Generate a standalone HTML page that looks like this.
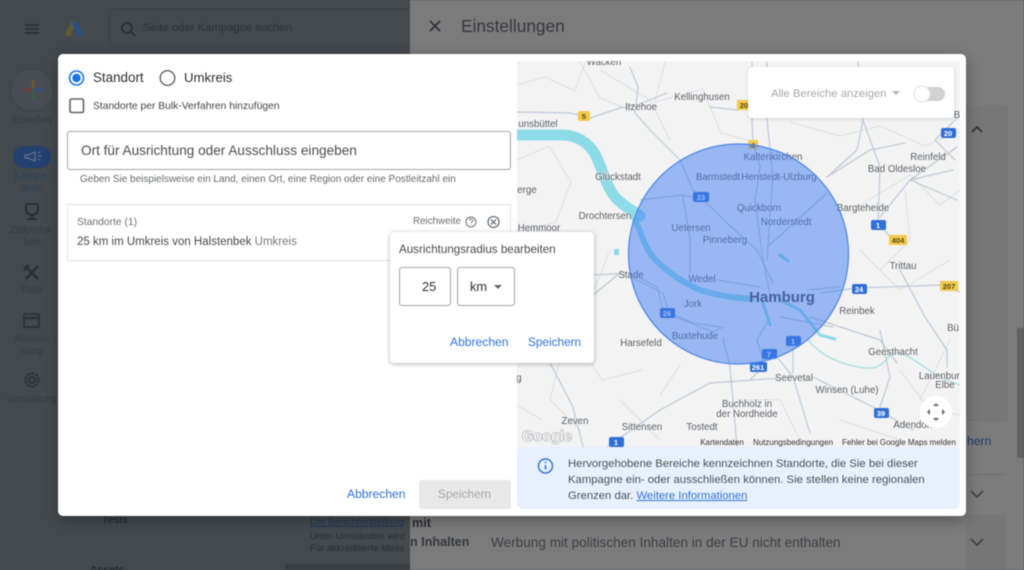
<!DOCTYPE html>
<html lang="de"><head><meta charset="utf-8"><title>Einstellungen</title>
<style>
html,body{margin:0;padding:0}
body{width:1024px;height:570px;overflow:hidden;position:relative;background:#43494e;font-family:"Liberation Sans",sans-serif}
#w{position:absolute;left:0;top:0;width:1024px;height:570px;overflow:hidden;filter:blur(.4px)}
.a{position:absolute;white-space:nowrap}
.d{opacity:.8;font-size:10px;text-align:center;line-height:11.5px;color:#33383c}
svg{position:absolute;left:0;top:0}
.m text{font-family:"Liberation Sans",sans-serif;font-size:9.7px;fill:#5c6064;text-anchor:middle;stroke:#f5f5f5;stroke-width:1.4px;paint-order:stroke;stroke-opacity:.6}
.m text.s{font-size:7.5px;font-weight:bold;fill:#fff;stroke:none}
.m text.y{font-size:7.5px;font-weight:bold;fill:#5a4a10;stroke:none}
.m text.c{stroke:none}
</style></head><body><div id="w">
<!-- right panel backdrop -->
<div class="a" style="left:410px;top:0;width:614px;height:570px;background:#7b7b7c"></div>
<div class="a" style="left:966px;top:105px;width:40px;height:315px;background:#777778;border-right:1px solid #727273"></div>
<div class="a" style="left:966px;top:420px;width:40px;height:1px;background:#707071"></div>
<div class="a" style="left:966px;top:474px;width:40px;height:1px;background:#6f6f70"></div>
<div class="a" style="left:966px;top:515px;width:40px;height:55px;background:#767677"></div>
<div class="a" style="left:1017px;top:328px;width:7px;height:130px;background:#606061"></div>
<div class="a" style="left:461px;top:15px;font-size:17.3px;line-height:22px;color:#35383b">Einstellungen</div>
<div class="a" style="left:102px;top:514px;font-size:11px;color:#23272a">Tests</div>
<div class="a" style="left:310px;top:517px;font-size:10.2px;color:#1d3557;text-decoration:underline">Die Berichterstellung</div>
<div class="a" style="left:412px;top:516px;font-size:12.6px;font-weight:bold;color:#2c2f32">mit</div>
<div class="a" style="left:310px;top:531px;font-size:9.5px;color:#2b2f33">Unter Umständen wird</div>
<div class="a" style="left:310px;top:543px;font-size:9.5px;color:#2b2f33">Für akkreditierte Mess</div>
<div class="a" style="left:90px;top:564px;font-size:10.5px;font-weight:bold;color:#23272a">Assets</div>
<div class="a" style="left:285px;top:564px;width:125px;height:6px;background:#393e42"></div>
<div class="a" style="left:410px;top:535px;font-size:12.6px;font-weight:bold;color:#34373a">n Inhalten</div>
<div class="a" style="left:491px;top:535px;font-size:13.6px;color:#3c3f42">Werbung mit politischen Inhalten in der EU nicht enthalten</div>
<div class="a" style="left:967px;top:434px;font-size:12.2px;color:#1c3b63">hern</div>
<!-- top bar left -->
<div class="a" style="left:109px;top:9px;width:301px;height:38px;border:1px solid #3b4045;border-right:0;border-radius:4px 0 0 4px;box-sizing:border-box"></div>
<div class="a" style="left:143px;top:22px;font-size:11.3px;color:#2e3236">Seite oder Kampagne suchen</div>
<!-- sidebar text -->
<div class="a d" style="left:0;top:115px;width:64px">Erstellen</div>
<div class="a d" style="left:0;top:171px;width:64px;color:#2b3f5e">Kampa-<br>gnen</div>
<div class="a d" style="left:0;top:225px;width:64px">Zielvorha-<br>ben</div>
<div class="a d" style="left:0;top:285px;width:64px">Tools</div>
<div class="a d" style="left:0;top:334px;width:64px">Abrech-<br>nung</div>
<div class="a d" style="left:0;top:394px;width:64px">Verwaltung</div>
<svg width="1024" height="570" viewBox="0 0 1024 570" fill="none">
 <path d="M25 25h14M25 29h14M25 33h14" stroke="#2b2f33" stroke-width="1.5"/>
 <path d="M67 36L74 22" stroke="#5f5c2e" stroke-width="5"/>
 <path d="M74 22L81 36" stroke="#2c4f86" stroke-width="5"/>
 <circle cx="127" cy="28" r="5" stroke="#2a2e32" stroke-width="1.7"/><path d="M131 32l4 4" stroke="#2a2e32" stroke-width="1.8"/>
 <path d="M430 21l10 10M440 21l-10 10" stroke="#303336" stroke-width="1.8"/>
 <circle cx="32" cy="90" r="21.5" fill="#474d52" stroke="#3f4449"/>
 <path d="M33 80v10" stroke="#6d5430" stroke-width="2.6"/><path d="M33 90v9" stroke="#3b5f45" stroke-width="2.6"/>
 <path d="M23 90h10" stroke="#6d4038" stroke-width="2.6"/><path d="M33 90h10" stroke="#34527f" stroke-width="2.6"/>
 <rect x="13" y="146" width="38" height="22" rx="11" fill="#24416f"/>
 <path d="M25 155h3l7-3v9l-7-3h-3zM38 153l2-1M38 156h3M38 159l2 1" stroke="#5d6d88" stroke-width="1.4"/>
 <path d="M26 204h12v5a6 6 0 0 1-12 0zM32 215v3M27 219h10" stroke="#2d3135" stroke-width="2"/>
 <path d="M25 266l13 13M38 266l-12 13M24 270l5-5" stroke="#2d3135" stroke-width="2.4"/>
 <rect x="24" y="314" width="15" height="13" rx="1" stroke="#2d3135" stroke-width="1.8"/><path d="M24 318h15" stroke="#2d3135" stroke-width="2.4"/>
 <circle cx="32" cy="380" r="3" stroke="#2d3135" stroke-width="1.7"/><circle cx="32" cy="380" r="6.5" stroke="#2d3135" stroke-width="2" stroke-dasharray="3 1.2"/>
 <path d="M972 132l5-5 5 5" stroke="#303336" stroke-width="1.8"/>
 <path d="M971 491l6 6 6-6" stroke="#3c3f42" stroke-width="1.6"/>
 <path d="M971 539l6 6 6-6" stroke="#3c3f42" stroke-width="1.6"/>
</svg>
<!-- dialog -->
<div class="a" style="left:58px;top:54px;width:908px;height:462px;background:#fff;border-radius:5px;box-shadow:0 4px 14px rgba(0,0,0,.3)"></div>
<svg class="m" width="1024" height="570" viewBox="0 0 1024 570" fill="none">
 <defs><clipPath id="mc"><rect x="517" y="61" width="443" height="386"/></clipPath></defs>
 <g clip-path="url(#mc)" stroke-linejoin="round" stroke-linecap="round">
 <rect x="517" y="61" width="443" height="386" fill="#f3f3f4"/>
 <g stroke="#dcdfe3" stroke-width="1">
  <path d="M517 85l28-8 30 14 10-28M580 62l20 36 30 12M517 160l32-14 22 36-15 40-39 10M665 62l-10 40 48-13 18 44 30 8M790 122l50 14 40-10 45 20 35-15M860 205l50-30 30 30 20-15M905 190l5 50-30 30M517 320l60 20 25 40 40-10M560 360l-10 40 30 30M660 395l20-30M900 370l30 40 30 5M800 440l-20-40-40 0M620 400l40 40M840 420l60 20M950 340l-30 60M517 405l25 15M610 250l-20 50-70 0M860 250l40 40 50-30M600 70l50 30 20 40"/>
 </g>
 <g stroke="#bfc8d6" stroke-width="1.2">
  <path d="M517 112L570 113 590 118 620 108 637 105 667 93M710 107L737 110"/>
  <path d="M630 67L638 87 635 113 650 130 680 160 693 190 727 223 757 250 773 283"/>
  <path d="M752 62V118L753 143 760 167 755 200 763 260 771 300"/>
  <path d="M767 62V120L773 177 770 217 767 260"/>
  <path d="M863 120L880 167 878 223 893 240M827 177L857 150 863 120 858 62"/>
  <path d="M957 147L910 180 880 217M953 170L910 180 957 200"/>
  <path d="M820 293L857 288 887 287 940 285 960 292"/>
  <path d="M517 275L593 275 630 273M620 273L593 295"/>
  <path d="M633 278L663 293 670 315 713 332 723 327M723 338L730 367 737 447"/>
  <path d="M780 378L710 383 660 410 607 447M750 380L767 363"/>
  <path d="M777 357L793 377 810 433M793 347V373"/>
  <path d="M810 317L880 340 897 363M813 377L873 407 913 430"/>
  <path d="M900 270L925 317 947 350 947 367M880 330L890 377 880 407"/>
  <path d="M550 363L573 407 583 447"/>
  <path d="M640 200L683 195 703 200M683 197L690 240 690 273M767 247L783 233 827 193"/>
  <path d="M630 273L657 287 663 310 693 323 720 327M717 280L760 287M767 323L757 340 763 360M807 290L840 287M780 317L833 327"/>
  <path d="M827 177L870 150 905 143M960 115L935 140 955 160"/>
 </g>
 <path d="M517 135H562C576 135 588 142 595 154 603 170 606 186 615 197 623 206 632 210 640 216" stroke="#8edbe8" stroke-width="11"/>
 <path d="M632 214C640 228 643 244 652 256 664 270 682 282 700 290 720 296 735 298 752 299" stroke="#8edbe8" stroke-width="6"/>
 <rect x="614" y="249" width="5" height="6" fill="#8edbe8"/>
 <path d="M762 300l8 25M780 300l20 10 20 25 15 4M780 255l8 6" stroke="#8edbe8" stroke-width="3"/>
 <path d="M808 340C820 355 840 365 865 368S885 345 905 355 930 375 960 385" stroke="#a8dfe2" stroke-width="1.4"/>
 <text x="604" y="65">Wacken</text><text x="641" y="110">Itzehoe</text><text x="702" y="100">Kellinghusen</text>
 <text x="538" y="127">unsbüttel</text><text x="527" y="193">erge</text><text x="618" y="180">Glückstadt</text>
 <text x="605" y="219">Drochtersen</text><text x="539" y="231">Hemmoor</text><text x="773" y="160">Kaltenkirchen</text>
 <text x="718" y="180">Barmstedt</text><text x="779" y="180">Henstedt-Ulzburg</text><text x="759" y="211">Quickborn</text>
 <text x="786" y="225">Norderstedt</text><text x="691" y="231">Uetersen</text><text x="725" y="243">Pinneberg</text>
 <text x="863" y="211">Bargteheide</text><text x="897" y="172">Bad Oldesloe</text><text x="928" y="160">Reinfeld</text>
 <text x="903" y="269">Trittau</text><text x="631" y="278">Stade</text><text x="702" y="282">Wedel</text>
 <text x="782" y="302" style="font-size:15px;font-weight:bold;fill:#44474c">Hamburg</text>
 <text x="693" y="307">Jork</text><text x="857" y="314">Reinbek</text><text x="695" y="339">Buxtehude</text>
 <text x="641" y="346">Harsefeld</text><text x="893" y="355">Geesthacht</text><text x="794" y="381">Seevetal</text>
 <text x="847" y="393">Winsen (Luhe)</text><text x="942" y="379">Lauenburg</text><text x="945" y="388">Elbe</text>
 <text x="747" y="407">Buchholz in</text><text x="747" y="417">der Nordheide</text><text x="575" y="424">Zeven</text>
 <text x="642" y="430">Sittensen</text><text x="702" y="430">Tostedt</text><text x="913" y="428">Adendorf</text>
 <text x="953" y="331">Bü</text><text x="957" y="118">B</text><text x="519" y="381">g</text>
 <g fill="#f2c94c">
  <rect x="578" y="111" width="12" height="10" rx="1"/><rect x="737" y="100" width="14" height="10" rx="1"/>
  <rect x="748" y="140" width="10" height="9" rx="1"/><rect x="889" y="235" width="18" height="10" rx="1"/>
  <rect x="940" y="281" width="18" height="10" rx="1"/>
 </g>
 <text class="y" x="584" y="119">5</text><text class="y" x="744" y="108">20</text><text class="y" x="753" y="148">4</text>
 <text class="y" x="898" y="243">404</text><text class="y" x="949" y="289">207</text>
 <g fill="#2f6fd6">
  <rect x="693" y="192" width="16" height="10" rx="2"/><rect x="941" y="128" width="15" height="10" rx="2"/>
  <rect x="871" y="220" width="15" height="10" rx="2"/><rect x="852" y="284" width="15" height="10" rx="2"/>
  <rect x="660" y="308" width="15" height="10" rx="2"/><rect x="786" y="336" width="15" height="10" rx="2"/>
  <rect x="762" y="349" width="15" height="10" rx="2"/><rect x="750" y="362" width="17" height="10" rx="2"/>
  <rect x="874" y="408" width="15" height="10" rx="2"/><rect x="609" y="437" width="15" height="10" rx="2"/>
 </g>
 <text class="s" x="701" y="200">23</text><text class="s" x="948" y="136">20</text><text class="s" x="878" y="228">1</text>
 <text class="s" x="859" y="292">24</text><text class="s" x="667" y="316">26</text><text class="s" x="793" y="344">1</text>
 <text class="s" x="769" y="357">7</text><text class="s" x="758" y="370">261</text><text class="s" x="881" y="416">39</text><text class="s" x="616" y="445">1</text>
 <circle cx="738.5" cy="254" r="110" fill="#3f7cf0" fill-opacity=".5" stroke="#4d85ea" stroke-width="1.2"/>
 <text x="547" y="441" style="font-size:14.5px;font-weight:bold;fill:#f5f5f5;stroke:#9a9ea3;stroke-width:1px;stroke-opacity:1">Google</text>
 <text class="c" x="722" y="445" style="font-size:8px;fill:#333">Kartendaten</text>
 <text class="c" x="793" y="445" style="font-size:8px;fill:#333">Nutzungsbedingungen</text>
 <text class="c" x="899" y="445" style="font-size:8px;fill:#333">Fehler bei Google Maps melden</text>
 </g>
</svg>
<!-- info box -->
<div class="a" style="left:517px;top:447px;width:443px;height:62px;background:#e8f0fd;border-radius:4px 4px 6px 6px"></div>
<!-- map controls -->
<div class="a" style="left:748px;top:67px;width:206px;height:51px;background:#fff;border-radius:4px;box-shadow:0 1px 3px rgba(0,0,0,.15)"></div>
<div class="a" style="left:771px;top:88px;font-size:11.3px;line-height:12px;color:#a9a9a9">Alle Bereiche anzeigen</div>
<svg width="1024" height="570" viewBox="0 0 1024 570" fill="none">
 <path d="M892 91h8l-4 4z" fill="#b5b5b5"/>
 <rect x="916" y="87" width="29" height="14" rx="7" fill="#d2d2d2"/>
 <circle cx="922" cy="94" r="8" fill="#fff" stroke="#e2e2e2"/>
 <circle cx="936" cy="412" r="16" fill="#fff"/>
 <path d="M933 406l3-3 3 3z M933 418l3 3 3-3z M930 409l-3 3 3 3z M942 409l3 3-3 3z" fill="#666"/>
 <!-- radios -->
 <circle cx="76.5" cy="78" r="7" stroke="#1a73e8" stroke-width="1.6"/>
 <circle cx="76.5" cy="78" r="4.2" fill="#1a73e8"/>
 <circle cx="167.5" cy="78" r="7.3" stroke="#5f6368" stroke-width="1.4"/>
 <rect x="70" y="99" width="13.5" height="13.5" rx="1.5" stroke="#5f6368" stroke-width="1.6"/>
 <!-- reichweite icons -->
 <circle cx="471" cy="222" r="5" stroke="#6b6f73" stroke-width="1"/>
 <path d="M469.3 220.6c.2-1.2 1-1.6 1.8-1.6 1 0 1.8.7 1.8 1.6 0 1.4-1.8 1.3-1.8 2.6M471.1 224.3v.7" stroke="#6b6f73" stroke-width=".9"/>
 <circle cx="493.5" cy="222" r="5.5" stroke="#55595d" stroke-width="1.1"/>
 <path d="M491 219.5l5 5M496 219.5l-5 5" stroke="#55595d" stroke-width="1.1"/>
 <!-- info -->
 <circle cx="545.5" cy="466" r="7" stroke="#2f6fd0" stroke-width="1.4"/>
 <path d="M545.5 465v4.5M545.5 461.8v1.4" stroke="#2f6fd0" stroke-width="1.5"/>
</svg>
<div class="a" style="left:93px;top:70px;font-size:13.4px;line-height:15px;color:#2c2f33">Standort</div>
<div class="a" style="left:184px;top:70px;font-size:13.2px;line-height:15px;color:#2c2f33">Umkreis</div>
<div class="a" style="left:93px;top:100px;font-size:10.3px;line-height:13px;color:#444">Standorte per Bulk-Verfahren hinzufügen</div>
<div class="a" style="left:67px;top:131px;width:444px;height:39px;box-sizing:border-box;border:1px solid #a2a5a9;border-radius:3px"></div>
<div class="a" style="left:81px;top:143px;font-size:13.6px;line-height:15px;color:#4a4d51">Ort für Ausrichtung oder Ausschluss eingeben</div>
<div class="a" style="left:80px;top:174px;font-size:10px;line-height:12px;color:#65686c">Geben Sie beispielsweise ein Land, einen Ort, eine Region oder eine Postleitzahl ein</div>
<div class="a" style="left:67px;top:204px;width:444px;height:57px;box-sizing:border-box;border:1px solid #e2e3e5"></div>
<div class="a" style="left:77px;top:217px;font-size:10.3px;line-height:12px;color:#6b6e72">Standorte (1)</div>
<div class="a" style="left:413px;top:216px;font-size:9.8px;line-height:12px;color:#6b6e72">Reichweite</div>
<div class="a" style="left:77px;top:235px;font-size:11.5px;line-height:14px;color:#46494d">25 km im Umkreis von Halstenbek <span style="color:#74777b">Umkreis</span></div>
<!-- popup -->
<div class="a" style="left:390px;top:232px;width:204px;height:131px;background:#fff;border-radius:4px;box-shadow:0 1px 5px rgba(0,0,0,.3)"></div>
<div class="a" style="left:399px;top:243px;font-size:11.6px;line-height:13px;color:#46494d">Ausrichtungsradius bearbeiten</div>
<div class="a" style="left:399px;top:267px;width:52px;height:39px;box-sizing:border-box;border:1px solid #a2a5a9;border-radius:3px"></div>
<div class="a" style="left:422px;top:279px;font-size:12.8px;line-height:15px;color:#2c2f33">25</div>
<div class="a" style="left:457px;top:267px;width:58px;height:39px;box-sizing:border-box;border:1px solid #a2a5a9;border-radius:3px"></div>
<div class="a" style="left:470px;top:279px;font-size:12.8px;line-height:15px;color:#2c2f33">km</div>
<svg width="1024" height="570" viewBox="0 0 1024 570"><path d="M494 285h8l-4 4z" fill="#666"/></svg>
<div class="a" style="left:450px;top:335px;font-size:12.1px;line-height:14px;color:#2f74d6">Abbrechen</div>
<div class="a" style="left:528px;top:335px;font-size:11.8px;line-height:14px;color:#2f74d6">Speichern</div>
<!-- footer -->
<div class="a" style="left:347px;top:487px;font-size:12.1px;line-height:14px;color:#2f6fd0">Abbrechen</div>
<div class="a" style="left:419px;top:480px;width:92px;height:29px;background:#e8e8e8;border-radius:3px"></div>
<div class="a" style="left:438px;top:487px;font-size:11.8px;line-height:14px;color:#a5a6a8">Speichern</div>
<!-- info text -->
<div class="a" style="left:568px;top:456px;font-size:11.3px;line-height:16px;color:#4d5156">Hervorgehobene Bereiche kennzeichnen Standorte, die Sie bei dieser<br>Kampagne ein- oder ausschließen können. Sie stellen keine regionalen<br>Grenzen dar. <span style="color:#2f74d6;text-decoration:underline">Weitere Informationen</span></div>
</div></body></html>
